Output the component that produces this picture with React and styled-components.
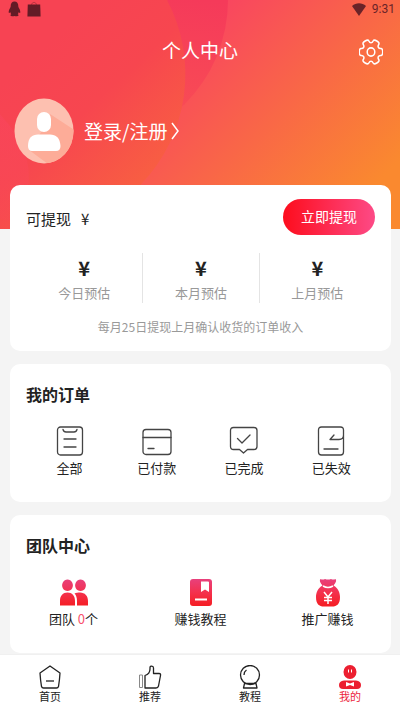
import { styled, createGlobalStyle } from "styled-components"

export default function App() {

    const estimates = ["今日预估", "本月预估", "上月预估"]

    const orders = [
        { name: "全部", icon: <AllIcon /> },
        { name: "已付款", icon: <PaidIcon /> },
        { name: "已完成", icon: <DoneIcon /> },
        { name: "已失效", icon: <ExpiredIcon /> },
    ]

    const tabs = [
        { name: "首页", icon: <HomeIcon /> },
        { name: "推荐", icon: <ThumbIcon /> },
        { name: "教程", icon: <BallIcon /> },
        { name: "我的", icon: <MeIcon />, active: true },
    ]

    return (
        <>
        <GlobalStyle />
        <Page>
            <Hero>
                <HeroArt />
                <StatusBar>
                    <StatusGroup>
                        <PenguinIcon />
                        <BagIcon />
                    </StatusGroup>
                    <StatusGroup>
                        <WifiIcon />
                        <span>9:31</span>
                    </StatusGroup>
                </StatusBar>
                <TitleBar>
                    <h1>个人中心</h1>
                    <SettingsButton aria-label="设置"><GearIcon /></SettingsButton>
                </TitleBar>
                <Login href="#login">
                    <Avatar />
                    <span>登录/注册</span>
                    <ChevronIcon />
                </Login>
            </Hero>

            <Main>
                <Card>
                    <Balance>
                        <p>可提现<span>¥</span></p>
                        <WithdrawButton>立即提现</WithdrawButton>
                    </Balance>
                    <Estimates>
                        {estimates.map((e) => (
                            <li key={e}>
                                <strong>¥</strong>
                                <span>{e}</span>
                            </li>
                        ))}
                    </Estimates>
                    <Note>每月25日提现上月确认收货的订单收入</Note>
                </Card>

                <Card>
                    <CardTitle>我的订单</CardTitle>
                    <Orders>
                        {orders.map((o) => (
                            <Item href="#orders" key={o.name}>
                                {o.icon}
                                <span>{o.name}</span>
                            </Item>
                        ))}
                    </Orders>
                </Card>

                <Card>
                    <CardTitle>团队中心</CardTitle>
                    <Team>
                        <Item href="#team"><PeopleIcon /><span>团队 <em>0</em>个</span></Item>
                        <Item href="#guide"><BookIcon /><span>赚钱教程</span></Item>
                        <Item href="#promote"><MoneyIcon /><span>推广赚钱</span></Item>
                    </Team>
                </Card>
            </Main>

            <TabBar>
                {tabs.map((t) => (
                    <Tab href="#tab" key={t.name} $active={t.active}>
                        {t.icon}
                        <span>{t.name}</span>
                    </Tab>
                ))}
            </TabBar>
        </Page>
        </>
    )
}

function HeroArt() {
    return (
        <Art viewBox="0 0 400 230" preserveAspectRatio="none" aria-hidden="true">
            <defs>
                <linearGradient id="base" gradientUnits="userSpaceOnUse" x1="190" y1="30" x2="360" y2="200">
                    <stop offset="0" stopColor="#f94560" />
                    <stop offset="0.5" stopColor="#f96747" />
                    <stop offset="1" stopColor="#fa892f" />
                </linearGradient>
                <linearGradient id="deep" gradientUnits="userSpaceOnUse" x1="200" y1="0" x2="190" y2="110">
                    <stop offset="0" stopColor="#f53a5a" />
                    <stop offset="1" stopColor="#f84b55" />
                </linearGradient>
                <linearGradient id="front" gradientUnits="userSpaceOnUse" x1="50" y1="40" x2="180" y2="180">
                    <stop offset="0" stopColor="#f74353" />
                    <stop offset="0.4" stopColor="#f7464f" />
                    <stop offset="1" stopColor="#f8643f" />
                </linearGradient>
                <linearGradient id="corner" gradientUnits="userSpaceOnUse" x1="0" y1="115" x2="20" y2="229">
                    <stop offset="0" stopColor="#fa4560" />
                    <stop offset="1" stopColor="#f84a52" />
                </linearGradient>
            </defs>
            <rect width="400" height="230" fill="url(#base)" />
            <circle cx="80" cy="0" r="148" fill="url(#deep)" />
            <path d="M0 0H167A160 160 0 0 1 142 184Q122 212 98 230H0Z" fill="url(#front)" />
            <path d="M0 115Q34 150 28 190Q26 212 10 222L0 220Z" fill="url(#corner)" opacity="0.5" />
        </Art>
    )
}

function PenguinIcon() {
    return (
        <svg width="13" height="16" viewBox="0 0 13 16" fill="#641b26">
            <path d="M6.500 .5C9 .5 10.300 2.300 10.300 5c0 1 .3 1.500 .9 2.600 .8 1.400 1.300 3 1 4.100-.3.700-1-.1-1.400-.7-.2 1-.6 1.600-1.100 2.200.7.300 1 .8.800 1.300-.3.900-3 .8-4 .4-1 .4-3.700.5-4-.4-.2-.5.100-1 .8-1.300-.5-.6-.9-1.200-1.100-2.200-.4.600-1.100 1.400-1.400.7-.3-1.100.2-2.700 1-4.100C2.400 6.500 2.700 6 2.700 5 2.700 2.300 4 .5 6.500.5z" />
        </svg>
    )
}

function BagIcon() {
    return (
        <svg width="14" height="16" viewBox="0 0 14 16">
            <path d="M.8 3.500H13.200L13.600 15.500H.4z" fill="#641b26" />
            <path d="M4.500 4C4.500.6 9.500.6 9.500 4" fill="none" stroke="#641b26" strokeOpacity="0.4" />
        </svg>
    )
}

function WifiIcon() {
    return (
        <svg width="14" height="13" viewBox="0 0 14 13" fill="#6a2328">
            <path d="M0 3C4-.8 10-.8 14 3L7 13z" />
        </svg>
    )
}

// six rounded teeth around the centre
function gearPath() {
    const point = (r, deg) => [12 + r * Math.cos(deg * Math.PI / 180), 12 + r * Math.sin(deg * Math.PI / 180)]
    const corners = []
    for (let a = 0; a < 360; a += 60) {
        corners.push(point(12.2, a - 16), point(12.2, a + 16), point(8.6, a + 21), point(8.6, a + 39))
    }
    const middle = (p, q) => `${((p[0] + q[0]) / 2).toFixed(2)} ${((p[1] + q[1]) / 2).toFixed(2)}`
    const start = middle(corners[corners.length - 1], corners[0])
    return `M${start}` + corners.map((c, i) => {
        const next = corners[(i + 1) % corners.length]
        return `Q${c[0].toFixed(2)} ${c[1].toFixed(2)} ${middle(c, next)}`
    }).join("") + "Z"
}

function GearIcon() {
    return (
        <svg width="24" height="26" viewBox="0 0 24 24" preserveAspectRatio="none" fill="none" stroke="#fff" strokeWidth="1.500">
            <path d={gearPath()} />
            <circle cx="12" cy="12" r="3.800" />
        </svg>
    )
}

function Avatar() {
    return (
        <svg width="60" height="66" viewBox="0 0 60 66">
            <defs>
                <clipPath id="face"><ellipse cx="30" cy="33" rx="29.500" ry="32.500" /></clipPath>
            </defs>
            <g clipPath="url(#face)">
                <rect width="60" height="66" fill="#fdc0b0" />
                <path d="M36 16L62 33V66H34L15 52L30 30z" fill="#fdac98" />
            </g>
            <rect x="23" y="14" width="14" height="20" rx="7" fill="#fff" />
            <path d="M14 48C14 40 18 36.500 24 36.500H36C42 36.500 46 40 46.500 48Q46.500 53 42 53H18Q14 53 14 48z" fill="#fff" />
        </svg>
    )
}

function ChevronIcon() {
    return (
        <svg width="8" height="18" viewBox="0 0 8 18" fill="none" stroke="#fff" strokeWidth="1.500">
            <path d="M1 1L7 9L1 17" />
        </svg>
    )
}

function AllIcon() {
    return (
        <OrderIcon viewBox="0 0 30 30">
            <rect x="2.500" y="1" width="25" height="28" rx="3" />
            <path d="M8 3.500C8.500 5.500 9.500 6 11 6H19C20.500 6 21.500 5.500 22 3.500M9 13H21M9 21H21" />
        </OrderIcon>
    )
}

function PaidIcon() {
    return (
        <OrderIcon viewBox="0 0 30 30">
            <rect x="1" y="3.500" width="28" height="25" rx="3" />
            <path d="M1 11.500H29M6 22.500H12" />
        </OrderIcon>
    )
}

function DoneIcon() {
    return (
        <OrderIcon viewBox="0 0 30 30">
            <path d="M4.500 1.500H25Q28 1.500 28 4.500V20.500Q28 23.500 25 23.500H18.500L14.500 27L10.500 23.500H4.500Q1.500 23.500 1.500 20.500V4.500Q1.500 1.500 4.500 1.500zM8.500 12.500L13 17L21 9" />
        </OrderIcon>
    )
}

function ExpiredIcon() {
    return (
        <OrderIcon viewBox="0 0 30 30">
            <path d="M27.500 9V4Q27.500 1 24.500 1H5.500Q2.500 1 2.500 4V26Q2.500 29 5.500 29H24.500Q27.500 29 27.500 26V9C27.500 12 26 13.500 23 13.500H14L18 9" />
            <path d="M8 23H22" />
        </OrderIcon>
    )
}

function RedGradient({ id }) {
    return (
        <defs>
            <linearGradient id={id} gradientUnits="userSpaceOnUse" x1="0" y1="0" x2="0" y2="28">
                <stop offset="0" stopColor="#e8407c" />
                <stop offset="0.5" stopColor="#f4304c" />
                <stop offset="1" stopColor="#f51c20" />
            </linearGradient>
        </defs>
    )
}

function PeopleIcon() {
    return (
        <svg width="30" height="28" viewBox="0 0 30 28">
            <RedGradient id="people" />
            <g fill="url(#people)">
                <path d="M8.500 .5a5.400 5.800 0 1 0 .01 0zM21.500 .5a5.400 5.800 0 1 0 .01 0zM1 26.500V22C1 16.500 4 13.500 8.500 13.500S16 16.500 16 22V26.500zM18 26.500V22C18 18.500 17 16 15.500 14.500 17 13.600 19 13.500 21 13.500 26 13.500 29 17 29 22V26.500z" />
            </g>
        </svg>
    )
}

function BookIcon() {
    return (
        <svg width="30" height="28" viewBox="0 0 30 28">
            <RedGradient id="book" />
            <rect x="4" y="0" width="22" height="27" rx="3" fill="url(#book)" />
            <path d="M15 2.500H22Q23 2.500 23 3.500V13L19 10.500L15 13zM9 19.500H21V21.500H9z" fill="#fff" />
        </svg>
    )
}

function MoneyIcon() {
    return (
        <svg width="30" height="28" viewBox="0 0 30 28">
            <RedGradient id="money" />
            <path d="M7.500 0C9 .8 10.500 .8 12 0C14 .8 16 .8 18 0C19.500 .8 21 .8 22.500 0C24 2 22.500 4 20.500 6.500C25 9 27 13.500 27 18C27 25 24 27.500 19 27.500H11C6 27.500 3 25 3 18C3 13.500 5 9 9.500 6.500C7.500 4 6 2 7.500 0z" fill="url(#money)" />
            <path d="M10 7Q15 10 20 7M11 13L15 18L19 13M15 18V25M11 18.500H19M11 21.500H19" fill="none" stroke="#fff" strokeWidth="1.500" />
        </svg>
    )
}

function HomeIcon() {
    return (
        <TabIcon viewBox="0 0 24 24">
            <path d="M12 1L22 8Q21.500 16 20.500 21.500Q20 23 18.500 23H5.500Q4 23 3.500 21.500Q2.500 16 2 8z" />
            <path d="M8 16H16" />
        </TabIcon>
    )
}

function ThumbIcon() {
    return (
        <TabIcon viewBox="0 0 24 24">
            <path d="M7 10.500C10 9.500 12 7.500 12 4V2.500C12 .5 15.500 .5 15.500 3V8.500H21Q23 8.500 22.500 10.500L20.500 21Q20 23 18 23H7z" />
            <path d="M1.500 10H4.500V22.500H1.500z" stroke="#888" strokeWidth="1" />
        </TabIcon>
    )
}

function BallIcon() {
    return (
        <TabIcon viewBox="0 0 24 24">
            <ellipse cx="12" cy="10" rx="9.500" ry="9.500" />
            <path d="M6.500 18.500H18L19 23H5.500zM6 10C6 7.500 7 6 8.500 5" />
        </TabIcon>
    )
}

function MeIcon() {
    return (
        <svg width="24" height="24" viewBox="0 0 24 24">
            <ellipse cx="12" cy="7" rx="6.500" ry="7" fill="#ec1f30" />
            <path d="M6 15.500H18Q23 16 23 20T19 24H5Q1 24 1 20T6 15.500z" fill="#ec1f30" />
            <path d="M10.500 4.500V7.500M13.500 4.500V7.500" stroke="#fff" strokeWidth="1" />
            <path d="M8 17L12 18.500L16 17V21.500L12 20L8 21.500z" fill="#fff" />
        </svg>
    )
}

const GlobalStyle = createGlobalStyle`
    * {
        box-sizing: border-box;
        margin: 0;
        padding: 0;
    }
    body {
        background-color: #f4f4f4;
        color: #222;
        font-family: "Noto Sans CJK SC", sans-serif;
    }
    a {
        color: inherit;
        text-decoration: none;
    }
    button {
        border: none;
        background: none;
        font-family: inherit;
        cursor: pointer;
    }
    ul {
        list-style: none;
    }
    svg {
        display: block;
        flex-shrink: 0;
    }
`

const Page = styled.div`
    min-height: 100vh;
    display: flex;
    flex-direction: column;
`

const Hero = styled.header`
    position: relative;
    color: white;
    padding-bottom: 65px;
`

const Art = styled.svg`
    position: absolute;
    inset: 0;
    width: 100%;
    height: 100%;
    z-index: -1;
`

const StatusBar = styled.div`
    display: flex;
    justify-content: space-between;
    height: 18px;
    padding: 0 5px 0 8px;
    color: #6a2328;
    font-family: Roboto, sans-serif;
    font-size: 12px;
    line-height: 18px;
`

const StatusGroup = styled.div`
    display: flex;
    align-items: center;
    gap: 6px;
`

const TitleBar = styled.div`
    display: grid;
    grid-template-columns: 1fr auto 1fr;
    align-items: center;
    height: 68px;
    padding: 0 17px;
    h1 {
        grid-column: 2;
        font-size: 19px;
        font-weight: 400;
        line-height: 28px;
        padding-bottom: 4px;
    }
`

const SettingsButton = styled.button`
    justify-self: end;
`

const Login = styled.a`
    display: flex;
    align-items: center;
    width: fit-content;
    padding: 12px 14px 0;
    font-size: 19px;
    line-height: 28px;
    span {
        margin: 0 4px 0 10px;
    }
`

const Main = styled.main`
    flex: 1;
    display: flex;
    flex-direction: column;
    gap: 13px;
    margin-top: -44px;
    padding: 0 9px 0 10px;
    position: relative;
`

const Card = styled.section`
    background-color: white;
    border-radius: 10px;
    padding: 14px 16px;
`

const Balance = styled.div`
    display: flex;
    align-items: center;
    justify-content: space-between;
    p {
        font-size: 15px;
        line-height: 20px;
        padding-top: 4px;
    }
    p span {
        margin-left: 10px;
    }
`

const WithdrawButton = styled.button`
    height: 36px;
    padding: 0 18px 2px;
    border-radius: 18px;
    background: linear-gradient(90deg, #fd0d1d, #fd4a86);
    color: white;
    font-size: 14px;
    line-height: 20px;
`

const Estimates = styled.ul`
    display: grid;
    grid-template-columns: repeat(3, 1fr);
    margin-top: 18px;
    li {
        display: flex;
        flex-direction: column;
        align-items: center;
        gap: 4px;
        height: 50px;
        padding-top: 4px;
    }
    li + li {
        border-left: 1px solid #e4e4e4;
    }
    strong {
        font-size: 20px;
        font-weight: 700;
        line-height: 22px;
    }
    span {
        color: #999;
        font-size: 13px;
        line-height: 20px;
    }
`

const Note = styled.p`
    margin-top: 14px;
    color: #999;
    font-size: 12px;
    line-height: 20px;
    text-align: center;
`

const CardTitle = styled.h2`
    font-size: 16px;
    font-weight: 700;
    line-height: 24px;
    padding-top: 4px;
`

const Orders = styled.div`
    display: grid;
    grid-template-columns: repeat(4, 1fr);
    margin-top: 20px;
`

const Team = styled.div`
    display: grid;
    grid-template-columns: repeat(3, 1fr);
    margin: 22px -16px 0;
`

const Item = styled.a`
    display: flex;
    flex-direction: column;
    align-items: center;
    gap: 2px;
    padding-bottom: 10px;
    font-size: 13px;
    line-height: 20px;
    em {
        color: #f8506c;
        font-style: normal;
    }
`

const OrderIcon = styled.svg`
    width: 30px;
    height: 30px;
    fill: none;
    stroke: #444;
    stroke-width: 1.3;
    stroke-linecap: round;
    stroke-linejoin: round;
`

const TabBar = styled.nav`
    position: sticky;
    bottom: 0;
    display: grid;
    grid-template-columns: repeat(4, 1fr);
    height: 56px;
    background-color: white;
    border-top: 1px solid #f0f0f0;
`

const Tab = styled.a`
    display: flex;
    flex-direction: column;
    align-items: center;
    padding-top: 10px;
    color: ${(props) => (props.$active ? "#ec1f40" : "#222")};
    font-size: 11px;
    line-height: 14px;
`

const TabIcon = styled.svg`
    width: 24px;
    height: 24px;
    fill: none;
    stroke: #222;
    stroke-width: 1.3;
    stroke-linejoin: round;
`
